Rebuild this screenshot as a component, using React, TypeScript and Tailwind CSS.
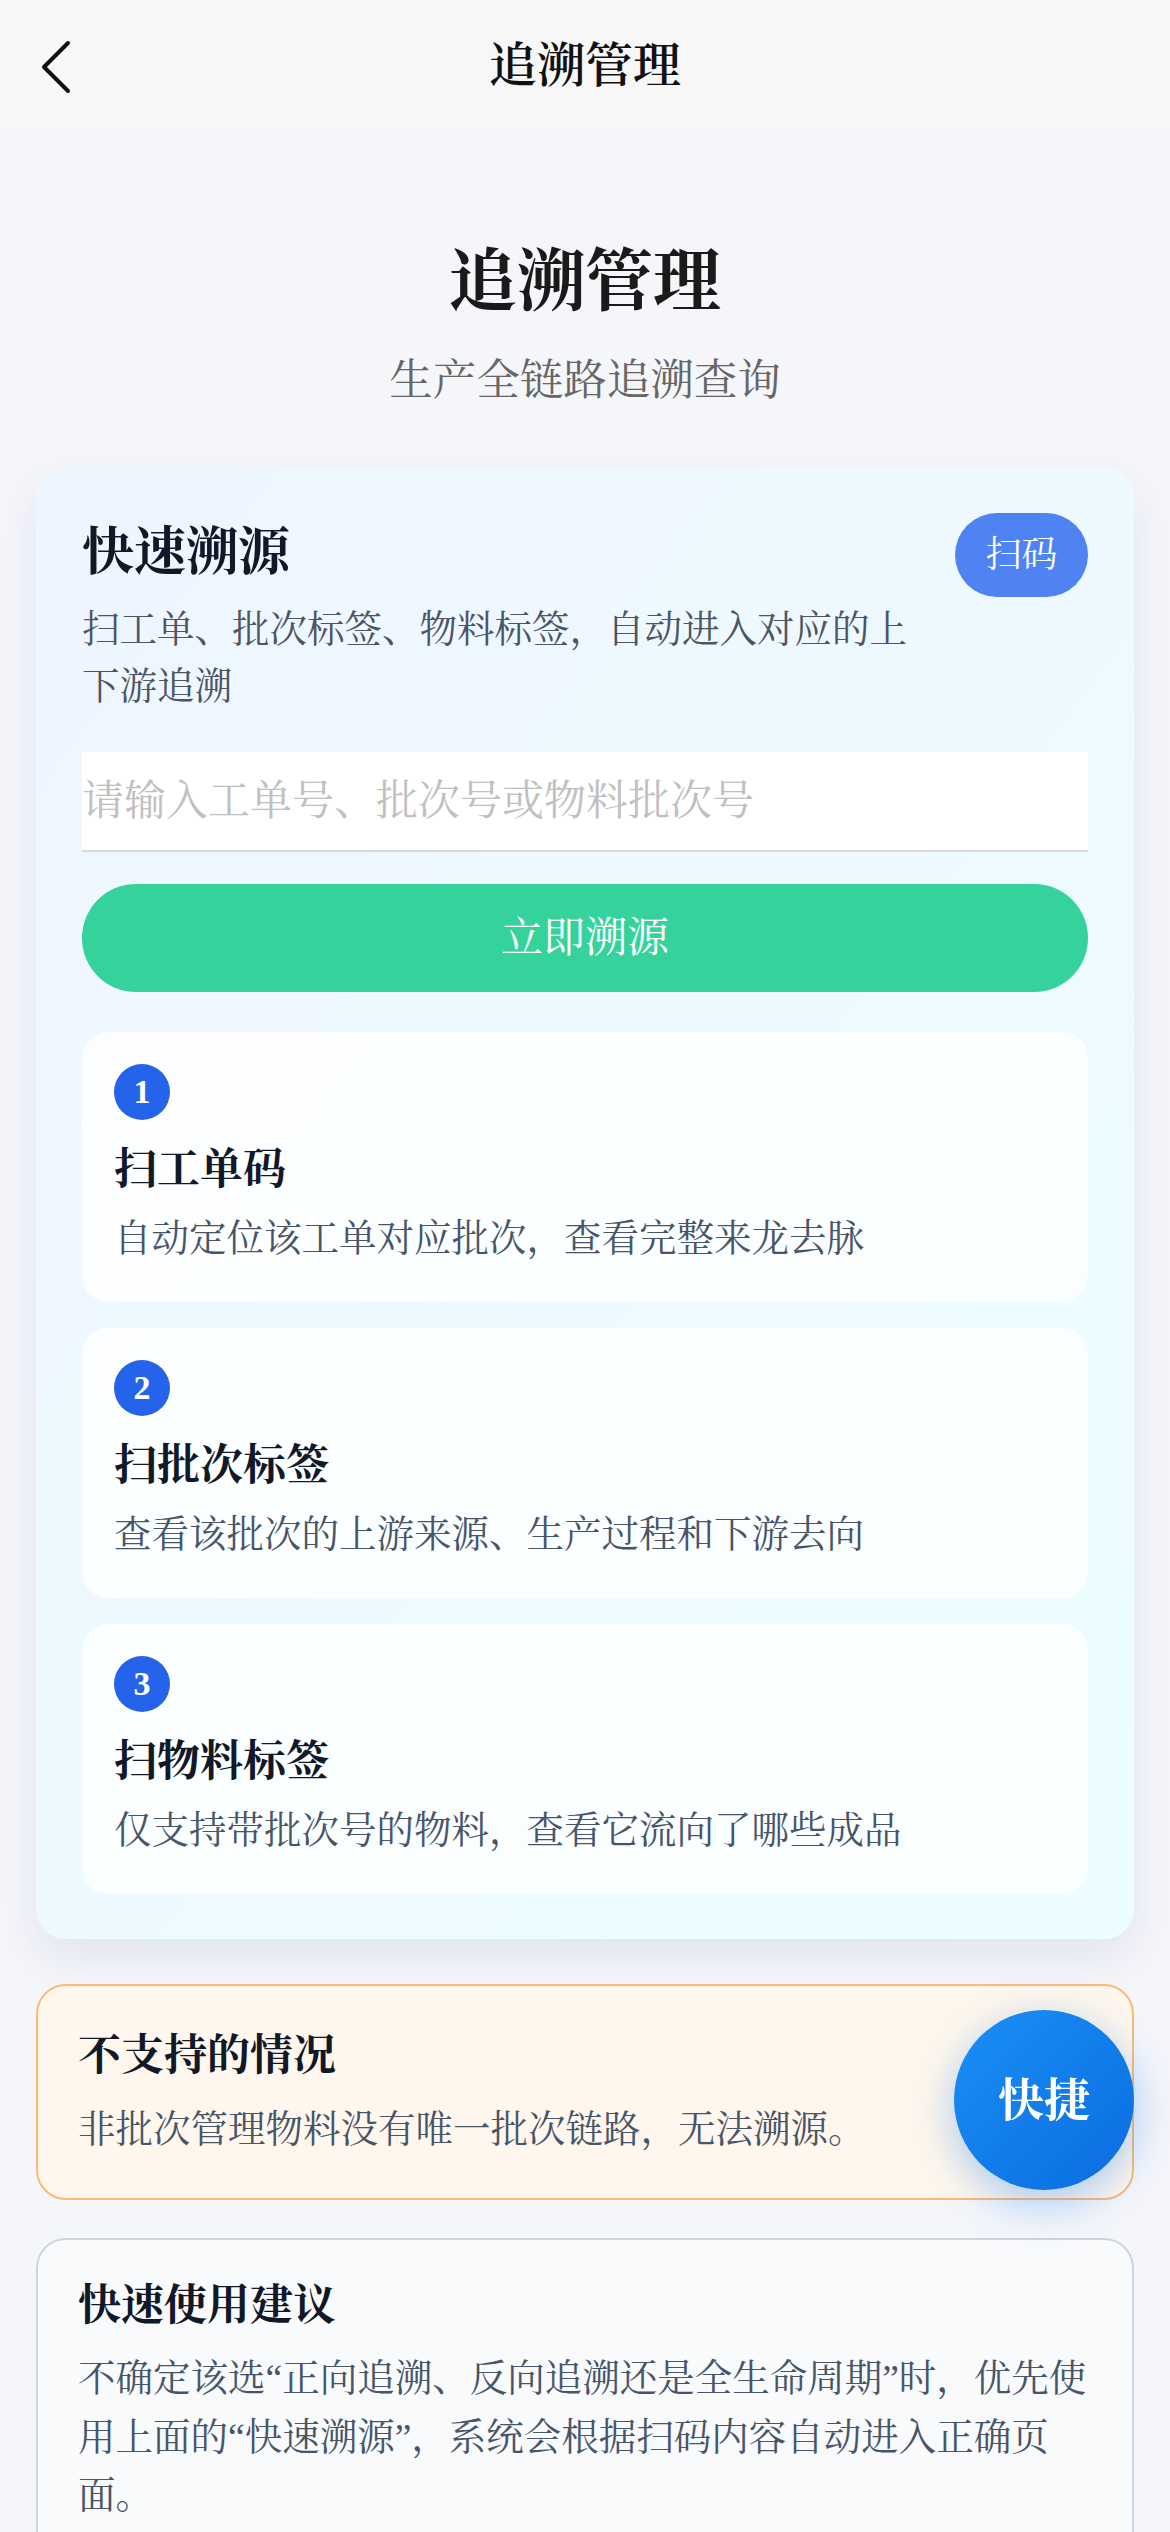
import React from "react";

const steps = [
  { n: "1", title: "扫工单码", desc: "自动定位该工单对应批次，查看完整来龙去脉" },
  { n: "2", title: "扫批次标签", desc: "查看该批次的上游来源、生产过程和下游去向" },
  { n: "3", title: "扫物料标签", desc: "仅支持带批次号的物料，查看它流向了哪些成品" },
];

export default function App() {
  return (
    <div className="min-h-[2532px] bg-[#f5f6fa] font-['Liberation_Serif','Noto_Serif_CJK_SC',serif]">
      {/* Header */}
      <div className="relative flex h-[132px] items-center justify-center bg-[#f7f7f7]">
        <svg
          className="absolute left-[38px] top-[40px]"
          width="36"
          height="54"
          viewBox="0 0 36 54"
          fill="none"
        >
          <path d="M30 3 L6 27 L30 51" stroke="#111" strokeWidth="4" strokeLinecap="round" strokeLinejoin="round" />
        </svg>
        <div className="text-[48px] font-semibold leading-none text-[#111]">追溯管理</div>
      </div>

      {/* Hero */}
      <div className="flex flex-col items-center pt-[106px]">
        <div className="text-[68px] font-bold leading-[88px] text-[#1a1a1a]">追溯管理</div>
        <div className="mt-[24px] text-[43.5px] leading-[60px] text-[#666]">生产全链路追溯查询</div>
      </div>

      {/* Quick trace card */}
      <div className="mx-[36px] mt-[57px] rounded-[30px] bg-gradient-to-br from-[#eff5ff] to-[#ecfeff] px-[46px] pb-[45px] pt-[46px] shadow-[0_20px_44px_rgba(40,70,160,0.09)]">
        <div className="flex items-start gap-[20px]">
          <div className="flex-1 pr-[6px]">
            <div className="text-[52px] font-bold leading-[80px] text-[#111827]">快速溯源</div>
            <div className="mt-[8px] text-[37.5px] leading-[57px] text-[#4b5563]">
              扫工单、批次标签、物料标签，自动进入对应的上下游追溯
            </div>
          </div>
          <div className="flex h-[84px] w-[133px] shrink-0 items-center justify-center rounded-full bg-[#4f83f1] text-[36px] text-white">
            扫码
          </div>
        </div>

        <div className="mt-[37px] flex h-[100px] items-center border-b-2 border-[#d9d9d9] bg-white text-[42px] text-[#c0c0c0]">
          请输入工单号、批次号或物料批次号
        </div>

        <div className="mt-[32px] flex h-[108px] items-center justify-center rounded-full bg-[#35d39b] text-[42px] text-white">
          立即溯源
        </div>

        <div className="mt-[40px] flex flex-col gap-[26px]">
          {steps.map((s) => (
            <div key={s.n} className="rounded-[26px] bg-white/80 px-[32px] pb-[35px] pt-[32px]">
              <div className="flex h-[56px] w-[56px] items-center justify-center rounded-full bg-[#2563eb] text-[34px] font-bold leading-none text-white">
                {s.n}
              </div>
              <div className="mt-[20px] text-[43px] font-bold leading-[60px] text-[#111827]">{s.title}</div>
              <div className="mt-[11px] text-[37.5px] leading-[56px] text-[#475569]">{s.desc}</div>
            </div>
          ))}
        </div>
      </div>

      {/* Unsupported */}
      <div className="mx-[36px] mt-[45px] rounded-[30px] border-2 border-[#fdba74] bg-[#fff7ed] px-[40px] pb-[40px] pt-[40px]">
        <div className="text-[43px] font-bold leading-[60px] text-[#111827]">不支持的情况</div>
        <div className="mt-[16px] text-[37.5px] leading-[56px] text-[#475569]">
          非批次管理物料没有唯一批次链路，无法溯源。
        </div>
      </div>

      {/* Tips */}
      <div className="mx-[36px] mt-[38px] rounded-[30px] border-2 border-[#cbd5e1] bg-[#f8fafc] px-[40px] pb-[40px] pt-[36px]">
        <div className="text-[43px] font-bold leading-[60px] text-[#111827]">快速使用建议</div>
        <div className="mt-[14px] text-[37.5px] leading-[58.5px] text-[#475569]">
          不确定该选“正向追溯、反向追溯还是全生命周期”时，优先使用上面的“快速溯源”，系统会根据扫码内容自动进入正确页面。
        </div>
      </div>

      {/* FAB */}
      <div className="fixed bottom-[342px] right-[36px] flex h-[180px] w-[180px] items-center justify-center rounded-full bg-gradient-to-br from-[#1b8ff6] to-[#0b6cdf] text-[46px] font-bold text-white shadow-[0_12px_44px_rgba(20,120,240,0.38)]">
        快捷
      </div>
    </div>
  );
}
